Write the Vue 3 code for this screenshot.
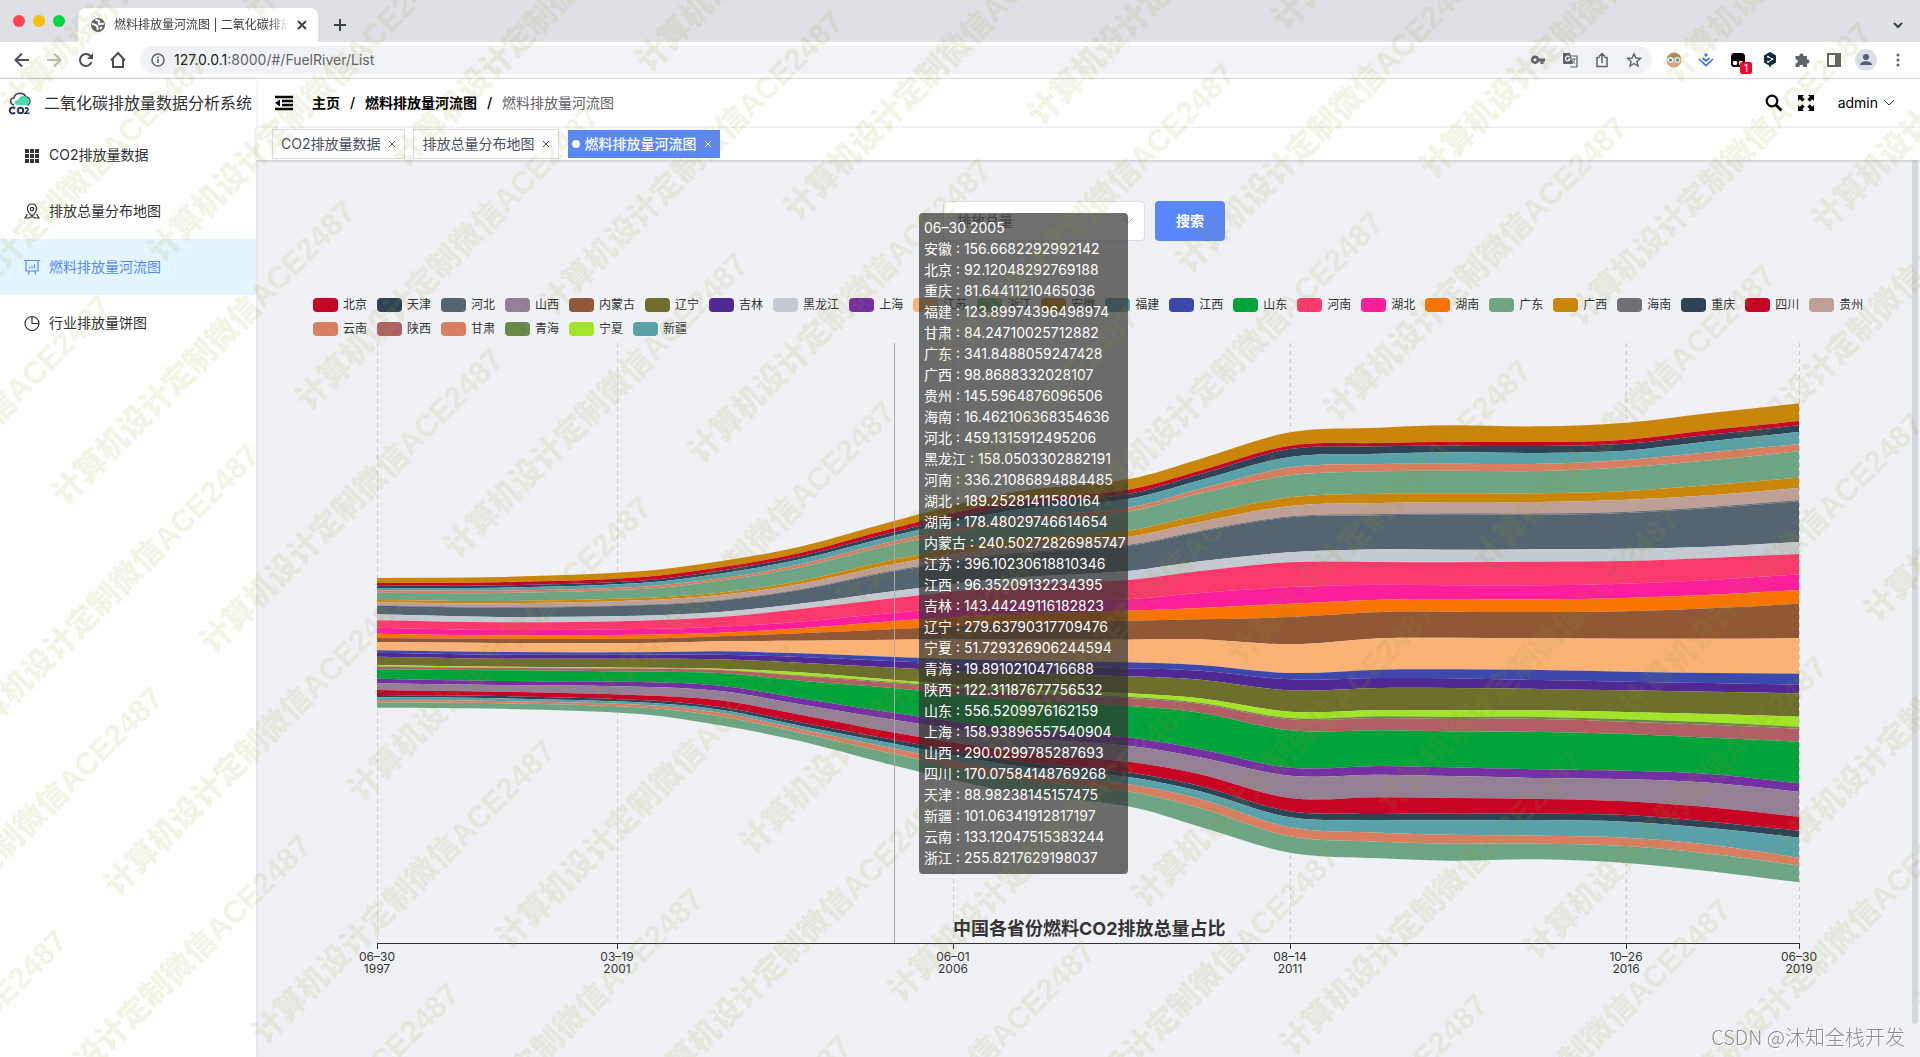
<script setup>
import { ref } from 'vue'

const menu = [
  { label: 'CO2排放量数据', icon: 'grid' },
  { label: '排放总量分布地图', icon: 'map' },
  { label: '燃料排放量河流图', icon: 'board', active: true },
  { label: '行业排放量饼图', icon: 'pie' },
]

const tags = [
  { label: 'CO2排放量数据' },
  { label: '排放总量分布地图' },
  { label: '燃料排放量河流图', active: true },
]

const metric = ref('排放总量')

const palette = {
  北京: '#c80425', 天津: '#2f4356', 河北: '#546471', 山西: '#938095', 内蒙古: '#915837',
  辽宁: '#6e6f2c', 吉林: '#4f2893', 黑龙江: '#c4cad2', 上海: '#7430a2', 江苏: '#fbb277',
  浙江: '#6da585', 安徽: '#ca8609', 福建: '#5aa2aa', 江西: '#3c48ab', 山东: '#00a43b',
  河南: '#fb396d', 湖北: '#fd1e9c', 湖南: '#f97400', 广东: '#6da585', 广西: '#ca8609',
  海南: '#6e7074', 重庆: '#2f4356', 四川: '#c80425', 贵州: '#bfa096', 云南: '#d77f60',
  陕西: '#b06064', 甘肃: '#d77f60', 青海: '#68894a', 宁夏: '#a3e429', 新疆: '#5aa2aa',
}
const legend = Object.entries(palette).map(([name, color]) => ({ name, color }))

const tooltip = [
  ['安徽', '156.6682292992142'], ['北京', '92.12048292769188'], ['重庆', '81.64411210465036'],
  ['福建', '123.89974396498974'], ['甘肃', '84.24710025712882'], ['广东', '341.8488059247428'],
  ['广西', '98.8688332028107'], ['贵州', '145.5964876096506'], ['海南', '16.462106368354636'],
  ['河北', '459.1315912495206'], ['黑龙江', '158.0503302882191'], ['河南', '336.21086894884485'],
  ['湖北', '189.25281411580164'], ['湖南', '178.48029746614654'], ['内蒙古', '240.50272826985747'],
  ['江苏', '396.10230618810346'], ['江西', '96.35209132234395'], ['吉林', '143.44249116182823'],
  ['辽宁', '279.63790317709476'], ['宁夏', '51.729326906244594'], ['青海', '19.89102104716688'],
  ['陕西', '122.31187677756532'], ['山东', '556.5209976162159'], ['上海', '158.93896557540904'],
  ['山西', '290.0299785287693'], ['四川', '170.07584148769268'], ['天津', '88.98238145157475'],
  ['新疆', '101.06341912817197'], ['云南', '133.12047515383244'], ['浙江', '255.8217629198037'],
]

// Stacked edges of the river, top to bottom, in thirds of a unit below `base`.
const columns = [
  { x: 377, base: 540, e: [114, 129, 136, 144, 151, 158, 180, 187, 196, 197, 223, 241, 263, 281, 294, 306, 331, 338, 350, 375, 379, 380, 388, 416, 430, 450, 465, 472, 480, 487, 503] },
  { x: 500, base: 540, e: [111, 127, 136, 143, 152, 159, 183, 190, 201, 203, 231, 247, 270, 286, 296, 309, 336, 344, 356, 380, 383, 384, 391, 423, 435, 455, 468, 475, 483, 490, 506] },
  { x: 640, base: 480, e: [274, 292, 302, 309, 320, 327, 354, 361, 374, 376, 407, 422, 447, 464, 476, 489, 517, 524, 536, 563, 565, 566, 575, 606, 620, 646, 660, 667, 674, 682, 702] },
  { x: 720, base: 480, e: [244, 262, 272, 281, 295, 302, 338, 345, 360, 362, 396, 411, 440, 458, 469, 484, 514, 524, 538, 566, 569, 570, 579, 617, 633, 661, 681, 689, 698, 709, 736] },
  { x: 800, base: 480, e: [200, 219, 229, 238, 253, 262, 303, 312, 328, 330, 371, 387, 425, 445, 460, 482, 520, 531, 548, 577, 586, 588, 602, 655, 673, 704, 727, 737, 747, 758, 783] },
  { x: 895, base: 480, e: [122, 143, 155, 166, 182, 193, 238, 251, 270, 273, 333, 354, 398, 423, 447, 479, 531, 544, 563, 600, 606, 609, 625, 699, 720, 758, 780, 792, 806, 823, 857] },
  { x: 1010, base: 400, e: [278, 305, 318, 332, 355, 368, 420, 437, 460, 464, 534, 559, 611, 642, 671, 719, 782, 797, 820, 865, 874, 878, 899, 985, 1009, 1053, 1081, 1095, 1114, 1134, 1175] },
  { x: 1128, base: 400, e: [238, 269, 282, 297, 323, 335, 392, 410, 434, 437, 513, 540, 598, 632, 662, 719, 787, 805, 829, 880, 890, 894, 918, 1012, 1037, 1085, 1117, 1131, 1153, 1174, 1219] },
  { x: 1200, base: 400, e: [177, 212, 223, 241, 267, 280, 345, 366, 392, 395, 484, 513, 579, 624, 658, 718, 795, 812, 839, 895, 908, 911, 938, 1048, 1072, 1123, 1158, 1174, 1197, 1224, 1280] },
  { x: 1290, base: 400, e: [97, 137, 147, 171, 202, 226, 292, 318, 349, 352, 457, 487, 561, 611, 651, 733, 819, 838, 871, 935, 954, 958, 991, 1103, 1127, 1194, 1234, 1252, 1282, 1309, 1358] },
  { x: 1380, base: 400, e: [83, 129, 139, 161, 192, 214, 281, 309, 342, 346, 448, 486, 554, 599, 636, 715, 809, 834, 864, 930, 949, 954, 991, 1098, 1124, 1192, 1239, 1260, 1298, 1325, 1375] },
  { x: 1450, base: 380, e: [136, 185, 197, 217, 251, 272, 340, 366, 400, 403, 509, 547, 616, 657, 695, 773, 868, 895, 924, 991, 1011, 1017, 1054, 1162, 1188, 1254, 1301, 1321, 1364, 1391, 1442] },
  { x: 1540, base: 380, e: [139, 186, 198, 219, 251, 273, 340, 366, 400, 404, 508, 545, 616, 658, 696, 775, 870, 900, 927, 991, 1011, 1017, 1056, 1168, 1194, 1257, 1301, 1320, 1367, 1391, 1438] },
  { x: 1626, base: 380, e: [128, 179, 191, 212, 240, 262, 333, 359, 395, 399, 506, 543, 611, 654, 694, 776, 875, 905, 931, 996, 1018, 1025, 1062, 1172, 1198, 1264, 1305, 1325, 1373, 1398, 1449] },
  { x: 1710, base: 380, e: [99, 150, 164, 184, 217, 241, 315, 346, 380, 384, 500, 534, 600, 644, 685, 776, 879, 909, 935, 1002, 1027, 1034, 1073, 1182, 1208, 1282, 1325, 1344, 1394, 1421, 1474] },
  { x: 1799, base: 380, e: [70, 123, 136, 156, 192, 214, 293, 324, 360, 364, 486, 522, 583, 630, 671, 775, 881, 914, 940, 1010, 1040, 1046, 1085, 1210, 1235, 1310, 1352, 1373, 1433, 1457, 1507] },
]

// Cubic segments whose tangents follow the neighbouring points.
function curve(points) {
  const slope = points.map((p, i) => {
    const a = points[Math.max(i - 1, 0)]
    const b = points[Math.min(i + 1, points.length - 1)]
    return (b[1] - a[1]) / (b[0] - a[0])
  })
  let d = ''
  for (let i = 1; i < points.length; i++) {
    const [x0, y0] = points[i - 1]
    const [x1, y1] = points[i]
    const h = (x1 - x0) / 3
    d += `C${(x0 + h).toFixed(1)} ${(y0 + slope[i - 1] * h).toFixed(1)} ${(x1 - h).toFixed(1)} ${(y1 - slope[i] * h).toFixed(1)} ${x1} ${y1.toFixed(1)}`
  }
  return d
}
const edge = (k) => columns.map((c) => [c.x, c.base + c.e[k] / 3])
const bands = tooltip.map(([name], k) => {
  const top = edge(k)
  const bottom = edge(k + 1).reverse()
  return {
    name,
    color: palette[name],
    d: `M${top[0][0]} ${top[0][1].toFixed(1)}${curve(top)}L${bottom[0][0]} ${bottom[0][1].toFixed(1)}${curve(bottom)}Z`,
  }
})

const ticks = [
  { x: 377, day: '06–30', year: '1997' },
  { x: 617, day: '03–19', year: '2001' },
  { x: 953, day: '06–01', year: '2006' },
  { x: 1290, day: '08–14', year: '2011' },
  { x: 1626, day: '10–26', year: '2016' },
  { x: 1799, day: '06–30', year: '2019' },
]

const marks = []
for (let i = -20; i <= 24; i++) {
  for (let j = -12; j <= 16; j++) {
    const x = 120 + 148 * i + 96 * j
    const y = 879 + 148 * i - 243 * j
    if (x > -270 && x < 1935 && y > -10 && y < 1330) marks.push({ x, y })
  }
}
</script>

<template>
  <div class="window">
    <div class="tabstrip">
      <div class="lights"><i class="red"></i><i class="yellow"></i><i class="green"></i></div>
      <div class="tab">
        <svg width="16" height="16" viewBox="0 0 16 16"><circle cx="8" cy="8" r="7" fill="#5f6368" /><path d="M2 7c2 0 3 1 5 2 1 1 0 2 1 4M6 2c0 2 2 1 3 2s-1 2 0 3 3-1 5 0M10 12l2-2" stroke="#fff" stroke-width="2" fill="none" /></svg>
        <span class="tab-title">燃料排放量河流图 | 二氧化碳排放量</span>
        <button class="bare" aria-label="关闭标签页"><svg width="10" height="10" viewBox="0 0 10 10"><path d="M1 1l8 8M9 1l-8 8" stroke="#3c4043" stroke-width="2" /></svg></button>
      </div>
      <button class="bare plus" aria-label="新建标签页"><svg width="14" height="14" viewBox="0 0 14 14"><path d="M7 1v12M1 7h12" stroke="#3c4043" stroke-width="2" /></svg></button>
      <button class="bare tab-more" aria-label="标签页列表"><svg width="12" height="12" viewBox="0 0 12 12"><path d="M2 4l4 4 4-4" fill="none" stroke="#3c4043" stroke-width="2" /></svg></button>
    </div>

    <div class="toolbar">
      <button class="bare nav" aria-label="后退"><svg width="16" height="16" viewBox="0 0 16 16"><path d="M15 8H2M8 1.500L1.500 8 8 14.500" fill="none" stroke="#4b4e52" stroke-width="2" /></svg></button>
      <button class="bare nav" aria-label="前进"><svg width="16" height="16" viewBox="0 0 16 16"><path d="M1 8h13M8 1.500L14.500 8 8 14.500" fill="none" stroke="#b9bbbe" stroke-width="2" /></svg></button>
      <button class="bare nav" aria-label="刷新"><svg width="16" height="16" viewBox="0 0 16 16"><path d="M13.500 10.200A6 6 0 1 1 12.500 4" fill="none" stroke="#4b4e52" stroke-width="2" /><path d="M15 1v6H9z" fill="#4b4e52" /></svg></button>
      <button class="bare nav" aria-label="主页"><svg width="18" height="18" viewBox="0 0 18 18"><path d="M2 9.500L9 2l7 7.500M4 8v8h10V8" fill="none" stroke="#4b4e52" stroke-width="2" /></svg></button>
      <div class="address">
        <svg width="16" height="16" viewBox="0 0 16 16"><circle cx="8" cy="8" r="6" fill="none" stroke="#5f6368" stroke-width="1.500" /><path d="M8 7v4M8 4.500v1.500" stroke="#5f6368" stroke-width="1.600" /></svg>
        <span class="url"><b>127.0.0.1</b>:8000/#/FuelRiver/List</span>
        <div class="address-icons">
          <svg width="16" height="16" viewBox="0 0 16 16"><path fill-rule="evenodd" d="M5 3.500a4.200 4.200 0 0 1 4 3h6v3h-1.500v2.500h-3V9.500H9a4.200 4.200 0 1 1-4-6zM5 6.200a1.600 1.600 0 1 0 0 3.200 1.600 1.600 0 0 0 0-3.200z" fill="#5f6368" /></svg>
          <svg width="16" height="16" viewBox="0 0 16 16"><path d="M6 4h9v11H8" fill="none" stroke="#5f6368" stroke-width="1.200" /><path d="M1 1h7l3 11H2a1 1 0 0 1-1-1z" fill="#5f6368" /><path d="M7.500 5A2.300 2.300 0 1 0 8 7H6" fill="none" stroke="#fff" stroke-width="1.200" /><path d="M9.500 7h4M12.800 7c-.3 2-1.500 3.500-3 4.500M10.500 8.500c.5 1.500 1.500 2.500 2.700 3.200" fill="none" stroke="#5f6368" /></svg>
          <svg width="16" height="16" viewBox="0 0 16 16"><path d="M5.500 5.500H3v9h10v-9h-2.500M8 11V2M5 4.500l3-3 3 3" fill="none" stroke="#5f6368" stroke-width="1.500" /></svg>
          <svg width="16" height="16" viewBox="0 0 16 16"><path d="M8 1.800l1.800 4.200 4.700.4-3.600 3 1.100 4.600L8 11.500 4 14l1.100-4.600-3.600-3 4.700-.4z" fill="none" stroke="#5f6368" stroke-width="1.400" /></svg>
        </div>
      </div>
      <div class="extensions">
        <svg width="16" height="16" viewBox="0 0 16 16"><circle cx="8" cy="8" r="7.500" fill="#e0a480" /><path d="M1 6a7.500 7.500 0 0 1 14 0z" fill="#a98d5c" /><circle cx="4.500" cy="8" r="3" fill="#e8f3f2" /><circle cx="11.500" cy="8" r="3" fill="#e8f3f2" /><circle cx="4.500" cy="8" r="1.600" fill="#3e9296" /><circle cx="11.500" cy="8" r="1.600" fill="#3e9296" /></svg>
        <svg width="16" height="16" viewBox="0 0 16 16"><path d="M1 7l7 6.500L15 7M4.500 6L8 9l3.500-3" fill="none" stroke="#3b6cf6" stroke-width="1.700" /><path d="M8 1l2 2-2 2-2-2z" fill="#3b6cf6" /></svg>
        <span class="ext-badge">
          <svg width="16" height="16" viewBox="0 0 16 16"><rect x="1" y="1" width="14" height="14" rx="3.500" /><circle cx="5" cy="11" r="2.300" fill="#fff" /><circle cx="11" cy="11" r="2.300" fill="#fff" /></svg>
          <em>1</em>
        </span>
        <svg width="16" height="16" viewBox="0 0 16 16"><path d="M8 0l6 3.500v7L9 13.500 8 16l-1-2.500-5-3v-7z" fill="#0f2b46" /><path d="M6 4.500l4.500 2.700L6 10" fill="none" stroke="#fff" /><circle cx="6" cy="4.800" r="1" fill="#fff" /><circle cx="10.300" cy="7.300" r="1" fill="#fff" /><circle cx="6" cy="9.700" r="1" fill="#fff" /></svg>
        <svg width="16" height="16" viewBox="0 0 16 16"><path d="M1.500 4h4a2 2 0 1 1 3.800 0H13v3.600a2 2 0 1 1 0 3.900V15H9.200a1.900 1.900 0 1 0-3.700 0h-4v-3.800a1.900 1.900 0 1 0 0-3.700z" fill="#5f6368" /></svg>
        <svg width="16" height="16" viewBox="0 0 16 16"><path fill-rule="evenodd" d="M1 1h14v14H1zM3 3v10h6V3z" fill="#5f6368" /></svg>
        <svg class="avatar" width="22" height="22" viewBox="0 0 22 22"><circle cx="11" cy="11" r="11" fill="#dcdee6" /><circle cx="11" cy="8" r="3" fill="#565e78" /><path d="M5 16c0-5 12-5 12 0z" fill="#565e78" /></svg>
        <svg width="16" height="16" viewBox="0 0 16 16" fill="#5f6368"><circle cx="8" cy="3" r="1.500" /><circle cx="8" cy="8" r="1.500" /><circle cx="8" cy="13" r="1.500" /></svg>
      </div>
    </div>

    <div class="app">
      <aside class="sidebar">
        <div class="brand">
          <svg width="24" height="24" viewBox="0 0 24 24">
            <path d="M6 14C1 13 2 7 6 7c1-6 10-6 12-1 5 1 5 7 1 8" fill="none" stroke="#3b4560" stroke-width="1.600" />
            <path d="M9 14c-4-1-2-5 1-5 1-4 7-6 9-2 4 1 3 7 0 7z" fill="#4ddcb6" />
            <g fill="none" stroke="#2c3553" stroke-width="2"><path d="M7 17.500A3 3 0 1 0 7 21.500" /><circle cx="12.500" cy="19.500" r="2.700" /><path d="M17 18c1-2 4-1 3 1l-3 3.200h4.500" stroke-width="1.500" /></g>
          </svg>
          <span>二氧化碳排放量数据分析系统</span>
        </div>
        <nav>
          <a v-for="m in menu" :key="m.label" href="#" class="menu-item" :class="{ active: m.active }">
            <svg width="16" height="16" viewBox="0 0 16 16" fill="none" stroke="currentColor" stroke-width="1.200">
              <g v-if="m.icon === 'grid'" fill="currentColor" stroke="none"><rect v-for="n in 9" :key="n" :x="1 + ((n - 1) % 3) * 5" :y="2 + Math.floor((n - 1) / 3) * 5" width="4" height="4" /></g>
              <g v-else-if="m.icon === 'map'"><path d="M8 13c-7-6-5-12 0-12s7 6 0 12zM3.500 11L1 15h4l3-1.500L11 15h4l-2.500-4" /><circle cx="8" cy="6" r="1.700" /></g>
              <g v-else-if="m.icon === 'board'"><path d="M0 1.500h16M2 1.500V12h12V1.500M5.500 12L4 15.500M10.500 12l1.500 3.500M5.500 9.500v-2M8 9.500v-3M10.500 9.500v-4" /></g>
              <g v-else><circle cx="8" cy="8.500" r="7" /><path d="M8 1.500V8.500h7" /></g>
            </svg>
            <span>{{ m.label }}</span>
          </a>
        </nav>
      </aside>

      <main class="main">
        <header class="header">
          <button class="bare fold" aria-label="折叠菜单"><svg width="18" height="16" viewBox="0 0 18 16"><path d="M0 2h18M7 6h11M7 10h11M0 14h18" stroke="#000" stroke-width="2.400" /><path d="M5 4.500v7L0 8z" /></svg></button>
          <nav class="crumbs"><a href="#">主页</a><i>/</i><a href="#">燃料排放量河流图</a><i>/</i><span>燃料排放量河流图</span></nav>
          <div class="header-right">
            <button class="bare" aria-label="搜索菜单"><svg width="18" height="18" viewBox="0 0 18 18"><circle cx="7" cy="7" r="5.300" fill="none" stroke="#000" stroke-width="2.200" /><path d="M11 11l5.500 5.500" stroke="#000" stroke-width="2.800" /></svg></button>
            <button class="bare" aria-label="全屏"><svg width="16" height="16" viewBox="0 0 16 16"><path d="M0 0h6L4.200 1.800l2.500 2.500-2.400 2.400-2.500-2.500L0 6zM16 0v6l-1.800-1.800-2.500 2.500-2.400-2.400 2.500-2.500L10 0zM0 16v-6l1.800 1.800 2.500-2.500 2.400 2.400-2.500 2.500L6 16zM16 16h-6l1.800-1.800-2.500-2.500 2.400-2.400 2.500 2.500L16 10z" /></svg></button>
            <button class="bare user">admin<svg width="12" height="12" viewBox="0 0 12 12"><path d="M1 3l5 5 5-5" fill="none" stroke="#333" /></svg></button>
          </div>
        </header>
        <div class="tags">
          <div v-for="t in tags" :key="t.label" class="tag" :class="{ active: t.active }">
            <i v-if="t.active" class="dot"></i><a href="#">{{ t.label }}</a>
            <button class="bare" :aria-label="'关闭' + t.label"><svg width="8" height="8" viewBox="0 0 8 8"><path d="M1 1l6 6M7 1l-6 6" stroke="currentColor" /></svg></button>
          </div>
        </div>

        <div class="scroller">
          <section class="content">
            <form class="filter" @submit.prevent>
              <div class="select">
                <select v-model="metric" aria-label="排放类型"><option>排放总量</option></select>
                <svg width="12" height="12" viewBox="0 0 12 12"><path d="M1 3l5 5 5-5" fill="none" stroke="#b4b8c0" /></svg>
              </div>
              <button class="primary">搜索</button>
            </form>

            <ul class="legend">
              <li v-for="s in legend" :key="s.name"><i :style="{ background: s.color }"></i>{{ s.name }}</li>
            </ul>

            <svg class="river" viewBox="256 340 1656 650" role="img" aria-label="中国各省份燃料CO2排放总量占比">
              <line v-for="t in ticks" :key="'g' + t.x" :x1="t.x + 0.5" :x2="t.x + 0.5" y1="343" y2="943" stroke="#ccc" stroke-dasharray="4 4" />
              <path v-for="b in bands" :key="b.name" :d="b.d" :fill="b.color" />
              <line x1="894.5" x2="894.5" y1="343" y2="943" stroke="#aaa" />
              <path d="M377 943.5H1800" stroke="#333" />
              <text class="chart-title" x="953" y="935">中国各省份燃料CO2排放总量占比</text>
              <g v-for="t in ticks" :key="t.x" class="tick">
                <path :d="`M${t.x + 0.5} 943v6`" stroke="#333" />
                <text :x="t.x" y="961">{{ t.day }}</text>
                <text :x="t.x" y="973">{{ t.year }}</text>
              </g>
            </svg>

            <div class="tooltip">
              <div>06–30 2005</div>
              <div v-for="[name, value] in tooltip" :key="name">{{ name }} : {{ value }}</div>
            </div>
          </section>
          <div class="scrollbar"><i></i></div>
        </div>
      </main>
    </div>

    <svg class="watermark" aria-hidden="true">
      <g>
        <text v-for="(m, i) in marks" :key="i" x="-15" y="11" :transform="`translate(${m.x} ${m.y}) rotate(-45)`">计算机设计定制微信ACE2487</text>
      </g>
    </svg>
    <div class="credit">CSDN @沐知全栈开发</div>
  </div>
</template>

<style>
body { margin: 0; }
</style>

<style scoped>
.window {
  position: relative;
  display: flex;
  flex-direction: column;
  min-height: 100vh;
  overflow: hidden;
  background: #fff;
  color: #303133;
  font: 14px/20px Inter, "Noto Sans CJK SC", sans-serif;
}
.window *, .window { box-sizing: border-box; }
svg { display: block; flex: none; }
a { color: inherit; text-decoration: none; }
.bare { display: flex; align-items: center; padding: 0; border: 0; background: none; color: inherit; font: inherit; }

.tabstrip { display: flex; align-items: center; height: 42px; padding: 0 16px 0 13px; background: #dee0e6; }
.lights { display: flex; gap: 8px; width: 65px; }
.lights i { width: 12px; height: 12px; border-radius: 50%; }
.red { background: #fe4450; }
.yellow { background: #fcbe0a; }
.green { background: #00d53d; }
.tab { display: flex; align-items: center; align-self: flex-end; width: 240px; height: 34px; padding: 0 11px 0 12px; border-radius: 8px 8px 0 0; background: #fff; }
.tab-title { flex: 1; margin: 0 8px 0 8px; overflow: hidden; white-space: nowrap; font-size: 12px; color: #3c4043; mask-image: linear-gradient(90deg, #000 88%, transparent); }
.plus { margin: 8px 0 0 15px; }
.tab-more { margin: 8px 0 0 auto; }

.toolbar { display: flex; align-items: center; height: 37px; padding: 0 14px 0 6px; border-bottom: 1px solid #d3d4d7; }
.nav { justify-content: center; width: 32px; }
.address { display: flex; flex: 1; align-items: center; gap: 8px; height: 28px; margin-left: 6px; padding: 0 10px; border-radius: 14px; background: #f0f2f5; }
.url { color: #5f6368; }
.url b { color: #202124; font-weight: 400; }
.address-icons { display: flex; gap: 16px; margin-left: auto; }
.extensions { display: flex; align-items: center; gap: 16px; margin-left: 14px; }
.avatar { margin: 0 -3px; }
.ext-badge { position: relative; }
.ext-badge em { position: absolute; left: 10px; top: 10px; width: 12px; height: 12px; border-radius: 2px; background: #f9002b; color: #fff; font: 10px/12px Inter, sans-serif; text-align: center; }

.app { display: flex; flex: 1; }
.sidebar { position: relative; flex: none; width: 256px; background: #fff; box-shadow: 0 0 4px rgba(0, 21, 41, 0.12); }
.brand { display: flex; align-items: center; gap: 12px; height: 48px; padding-left: 8px; font-size: 16px; white-space: nowrap; }
.menu-item { display: flex; align-items: center; gap: 9px; height: 56px; padding-left: 24px; }
.menu-item.active { background: #e3f6ff; color: #5887fe; }

.main { display: flex; flex: 1; flex-direction: column; min-width: 0; }
.header { display: flex; align-items: center; height: 48px; padding: 0 25px 0 19px; }
.crumbs { display: flex; margin-left: 19px; color: #606266; }
.crumbs a { color: #000; font-weight: 700; }
.crumbs i { width: 25px; color: #000; font-style: normal; font-weight: 500; text-align: center; }
.header-right { display: flex; align-items: center; gap: 15px; margin-left: auto; color: #000; }
.user { gap: 5px; margin-left: 9px; }
.tags { position: relative; display: flex; align-items: center; gap: 8px; height: 33px; padding: 0 16px 1px; border-top: 1px solid #f0f0f2; box-shadow: 0 1px 3px rgba(0, 0, 0, 0.2); }
.tag { display: flex; align-items: center; gap: 8px; height: 30px; padding: 0 8px; border: 1px solid #dcdfe8; color: #495060; }
.tag.active { height: 28px; margin-left: 1px; padding: 0 8px 0 4px; gap: 4px; border: 0; background: #5887fe; color: #fff; font-weight: 500; }
.tag.active .bare { margin-left: 4px; }
.dot { width: 8px; height: 8px; border-radius: 50%; background: #fff; }

.scroller { display: flex; flex: 1; background: #f0f1f5; }
.content { position: relative; flex: 1; min-width: 0; padding-top: 41px; }
.scrollbar { flex: none; width: 8px; padding-bottom: 33px; }
.scrollbar i { display: block; width: 6px; height: 100%; border-radius: 3px; background: #d4d7dc; }
.filter { display: flex; justify-content: center; gap: 10px; height: 40px; }
.select { position: relative; width: 202px; }
.select select { width: 100%; height: 40px; padding: 0 13px; border: 1px solid #dcdfe6; border-radius: 4px; background: #fff; color: #606266; font: inherit; appearance: none; }
.select svg { position: absolute; right: 11px; top: 14px; }
.primary { width: 70px; border: 0; border-radius: 4px; background: #5887fe; color: #fff; font: inherit; font-weight: 700; }
.legend { display: flex; flex-wrap: wrap; gap: 10px; margin: 57px 40px 4px 57px; padding: 0; list-style: none; color: #333; font-size: 12px; line-height: 14px; }
.legend li { display: flex; gap: 5px; }
.legend i { width: 25px; height: 14px; border-radius: 4px; }
.river { width: 100%; height: auto; }
.chart-title { fill: #333; font-size: 18px; font-weight: 700; }
.tick { fill: #333; font-size: 12px; text-anchor: middle; }
.tooltip { position: absolute; left: 663px; top: 53px; width: 209px; padding: 4px 5px 6px; border-radius: 4px; background: rgba(50, 50, 50, 0.7); color: #fff; line-height: 21px; white-space: nowrap; }

.watermark { position: absolute; inset: 0; width: 100%; height: 100%; overflow: hidden; pointer-events: none; }
.watermark g { opacity: 0.12; fill: #96962d; font: 900 31px "Liberation Sans", "Noto Sans CJK SC", sans-serif; }
.credit { position: absolute; right: 15px; bottom: 8px; color: #8b8d91; font: 300 20px/24px "Noto Sans CJK SC", sans-serif; text-shadow: 1px 1px 0 #fff; }
</style>
